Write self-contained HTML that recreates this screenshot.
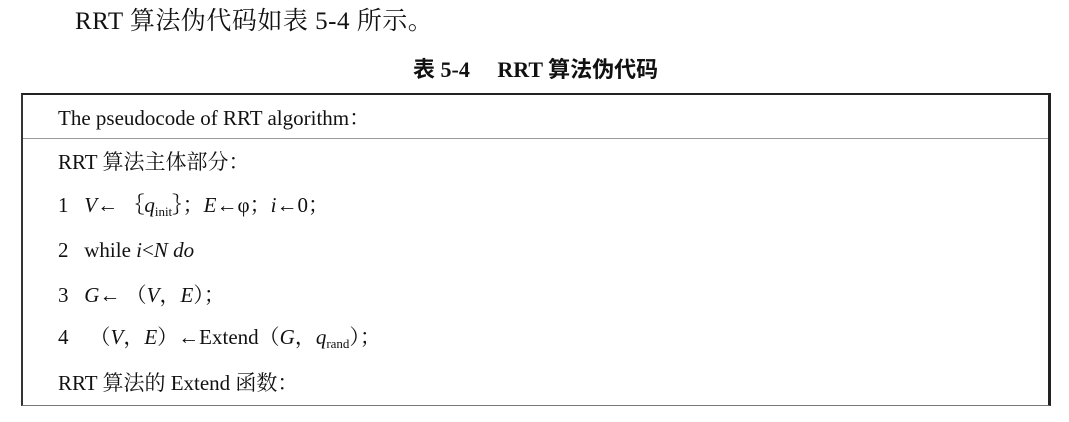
<!DOCTYPE html>
<html><head><meta charset="utf-8"><style>
body{margin:0;width:1069px;height:422px;background:#fff;position:relative;overflow:hidden;font-family:"Liberation Serif","Noto Serif CJK SC",serif;color:#111}
.a{position:absolute;white-space:nowrap;line-height:24px}
.box{position:absolute;left:21px;top:93px;width:1025px;height:310px;border-top:2px solid #222;border-left:2px solid #333;border-right:3px solid #222;border-bottom:1px solid #777}
.sep{position:absolute;left:23px;top:138px;width:1025px;height:1px;background:#999}
.r{font-size:21px;left:58px}
i{font-style:italic}
sub{font-size:13px;position:relative;top:4px;vertical-align:baseline;line-height:0}
</style></head><body>
<div class="a" style="left:75px;top:10px;font-size:25px;letter-spacing:0.5px">RRT 算法伪代码如表 5-4 所示。</div>
<div class="a" style="left:413px;top:58px;font-size:22px;font-weight:bold;font-family:'Liberation Serif','Noto Sans CJK SC',serif">表 5-4&nbsp;&nbsp;&nbsp;&nbsp;&nbsp;RRT 算法伪代码</div>
<div class="box"></div><div class="sep"></div>
<div class="a r" style="top:106px">The pseudocode of RRT algorithm：</div>
<div class="a r" style="top:150px">RRT 算法主体部分：</div>
<div class="a r" style="top:193px">1&nbsp;&nbsp;&nbsp;<i>V</i>← ｛<i>q</i><sub>init</sub>｝；<i>E</i>←φ；<i>i</i>←0；</div>
<div class="a r" style="top:238px">2&nbsp;&nbsp;&nbsp;while <i>i</i>&lt;<i>N do</i></div>
<div class="a r" style="top:283px">3&nbsp;&nbsp;&nbsp;<i>G</i>← （<i>V</i>，<i>E</i>）；</div>
<div class="a r" style="top:325px">4&nbsp;&nbsp;&nbsp;&nbsp;（<i>V</i>，<i>E</i>）←Extend（<i>G</i>，<i>q</i><sub>rand</sub>）；</div>
<div class="a r" style="top:371px">RRT 算法的 Extend 函数：</div>
</body></html>
